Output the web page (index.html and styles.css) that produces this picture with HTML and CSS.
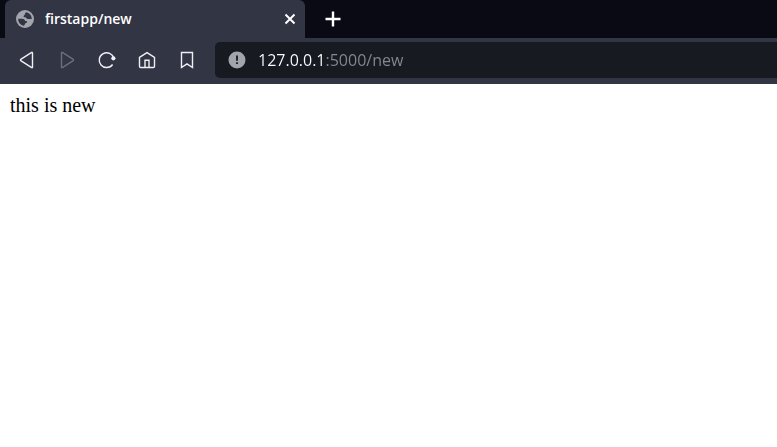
FILE: index.html
```html
<!DOCTYPE html>
<html lang="en">
<head>
<meta charset="utf-8">
<title>firstapp/new</title>
<link rel="stylesheet" href="styles.css">
</head>
<body>
<header class="browser">
  <div class="tabs">
    <div class="tab">
      <svg class="favicon" viewBox="0 0 18 18" aria-hidden="true">
        <circle cx="9" cy="9" r="9" fill="#a3a5ad"/>
        <path d="M10.6 2.2C9 2.5 8.7 3.6 9.3 4.3C8.2 4.6 8.1 5.7 7.6 6.3C7.2 7 8.3 7.4 9.2 7.3C10.4 7.3 10.4 8.7 11.4 9H15.8C15.9 6 13.8 3 10.6 2.2ZM2.2 8.8H6.2C8 8.8 9 9.7 9 11.1H10.8V12.7C9.8 12.8 8.9 13.3 8.9 14.2L8 15.7C4.6 15.4 2 12.4 2.2 8.8Z" fill="#323544"/>
      </svg>
      <span class="tab-title">firstapp/new</span>
      <button class="close" aria-label="Close tab">
        <svg viewBox="0 0 12 12"><path d="M1.5 1.5L10.5 10.5M10.5 1.5L1.5 10.5" stroke="#fff" stroke-width="2"/></svg>
      </button>
    </div>
    <button class="add" aria-label="New tab">
      <svg viewBox="0 0 16 16"><path d="M8 .5V15.5M.5 8H15.5" stroke="#fff" stroke-width="2.4"/></svg>
    </button>
  </div>
  <nav class="toolbar">
    <div class="actions">
      <button class="action" aria-label="Back">
        <svg viewBox="0 0 20 20"><path d="M15.5 3.1V16.9Q15.5 18.2 14.3 17.4L4.1 10.9Q2.8 10 4.1 9.1L14.3 2.6Q15.5 1.8 15.5 3.1Z"/></svg>
      </button>
      <button class="action" aria-label="Forward" disabled>
        <svg viewBox="0 0 20 20"><path d="M4.5 3.1V16.9Q4.5 18.2 5.7 17.4L15.9 10.9Q17.2 10 15.9 9.1L5.7 2.6Q4.5 1.8 4.5 3.1Z"/></svg>
      </button>
      <button class="action" aria-label="Reload">
        <svg viewBox="0 0 20 20"><path d="M16.8 8.3A7.4 7.4 0 1 0 15.6 14.5"/><circle cx="16.4" cy="8.3" r="2.1" class="dot"/></svg>
      </button>
      <button class="action" aria-label="Home">
        <svg viewBox="0 0 20 20"><path d="M2.5 7.4L10 2.6L17.5 7.4V16.3Q17.5 17.5 16.3 17.5H3.7Q2.5 17.5 2.5 16.3ZM8 17.5V10.2H12V17.5"/></svg>
      </button>
      <button class="action" aria-label="Bookmark">
        <svg viewBox="0 0 20 20"><path d="M4.5 2.5H15.5V17.5L10 13.8L4.5 17.5Z"/></svg>
      </button>
    </div>
    <div class="address">
      <svg class="info" viewBox="0 0 18 18" aria-hidden="true">
        <circle cx="9" cy="9" r="8.5" fill="#a3a5ad"/>
        <path d="M9 4.5V9.8M9 11.2V13" stroke="#171a21" stroke-width="1.8"/>
      </svg>
      <input class="url" type="text" aria-label="Address" value="127.0.0.1:5000/new" spellcheck="false">
    </div>
  </nav>
</header>
<main class="page">this is new</main>
</body>
</html>
```
FILE: styles.css
```css
* { box-sizing: border-box; }
body {
  margin: 0;
  background: #fff;
  color: #000;
  font-family: "Liberation Serif", serif;
}
button {
  display: flex;
  align-items: center;
  justify-content: center;
  padding: 0;
  border: 0;
  background: none;
}
.browser {
  background: #323544;
  font-family: "Open Sans", "Noto Sans", sans-serif;
}
.tabs {
  display: flex;
  height: 38px;
  padding-left: 5px;
  background: #0a0a15;
}
.tab {
  display: flex;
  align-items: center;
  flex: 0 1 300px;
  padding: 0 9px 0 11px;
  border-radius: 6px 6px 0 0;
  background: #323544;
}
.favicon, .info {
  flex: none;
  width: 18px;
  height: 18px;
}
.tab-title {
  flex: 1;
  margin-left: 11px;
  padding-bottom: 2px;
  color: #fff;
  font-size: 14px;
  font-weight: 600;
}
.close, .close svg {
  width: 12px;
  height: 12px;
}
.add {
  width: 55px;
}
.add svg {
  width: 16px;
  height: 16px;
}
.toolbar {
  display: flex;
  align-items: center;
  height: 46px;
  padding: 0 0 2px 7px;
}
.actions {
  display: flex;
}
.action {
  width: 40px;
  height: 36px;
}
.action svg {
  width: 20px;
  height: 20px;
  fill: none;
  stroke: #f0f0f4;
  stroke-width: 1.4;
}
.action:disabled svg {
  stroke: #6c6f7c;
}
.action .dot {
  fill: #f0f0f4;
  stroke: none;
}
.address {
  display: flex;
  align-items: center;
  flex: 1;
  height: 36px;
  margin-left: 8px;
  padding-left: 13px;
  border-radius: 5px 0 0 5px;
  background: #171a21;
}
.url {
  flex: 1;
  min-width: 0;
  margin-left: 12px;
  padding: 0;
  border: 0;
  outline: 0;
  background: linear-gradient(to right, #fff 68px, #868990 68px);
  background-clip: text;
  -webkit-background-clip: text;
  color: transparent;
  caret-color: #fff;
  font-family: inherit;
  font-size: 16px;
  line-height: 24px;
}
.page {
  padding: 9px 10px;
  font-size: 20px;
  line-height: 24px;
}
```
